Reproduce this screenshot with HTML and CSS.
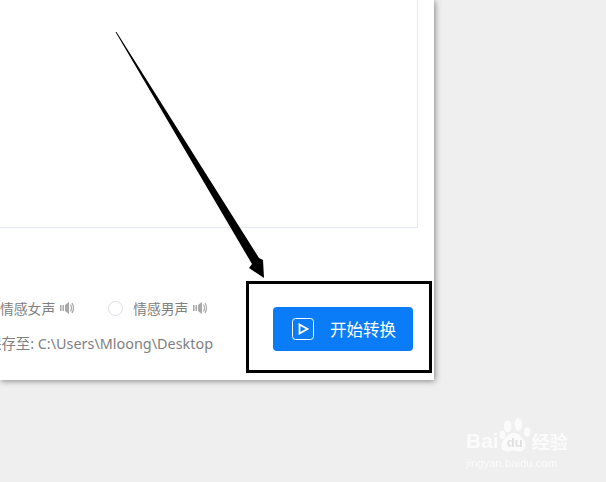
FILE: index.html
```html
<!DOCTYPE html>
<html lang="zh">
<head>
<meta charset="utf-8">
<title>开始转换</title>
<link rel="stylesheet" href="styles.css">
</head>
<body>
<main class="window">
  <div class="text-box"></div>
  <div class="footer">
    <div class="options">
      <div class="voice-row">
        <span class="voice">情感女声
          <svg class="speaker" viewBox="0 0 14 14"><rect x="0" y="4" width="1.5" height="6"/><rect x="2.5" y="4" width="1.5" height="6"/><path d="M5 4 9 1v12L5 10z"/><path class="wave" d="M10.5 3.5q2 3.500 0 7M12 2q3 5 0 10"/></svg>
        </span>
        <span class="radio"></span>
        <span class="voice">情感男声
          <svg class="speaker" viewBox="0 0 14 14"><rect x="0" y="4" width="1.5" height="6"/><rect x="2.5" y="4" width="1.5" height="6"/><path d="M5 4 9 1v12L5 10z"/><path class="wave" d="M10.5 3.5q2 3.500 0 7M12 2q3 5 0 10"/></svg>
        </span>
      </div>
      <div class="save-path">保存至: C:\Users\Mloong\Desktop</div>
    </div>
    <button class="start" type="button">
      <svg class="play" viewBox="0 0 22 22"><rect x=".5" y=".5" width="21" height="21" rx="3"/><path d="M7.500 6.500 15.500 11 7.500 15.500z"/></svg>
      <span>开始转换</span>
    </button>
  </div>
</main>
<div class="highlight"></div>
<svg class="arrow" viewBox="0 0 606 482"><polygon points="115.500,32 116.500,32 259,258 263,260 264,278 249,268 252,264"/></svg>
<div class="watermark">
  <div class="wm-top">
    <span class="wm-latin">Bai</span>
    <span class="wm-paw">
      <svg class="paw" viewBox="0 0 34 36"><ellipse cx="9" cy="9" rx="4" ry="6"/><ellipse cx="20" cy="7" rx="4" ry="6.500"/><ellipse cx="29" cy="15" rx="3.500" ry="5"/><ellipse cx="3.500" cy="18" rx="3" ry="4.500"/><path d="M16 16c5 0 7 4 10 8 3 4 1 11-5 11-2 0-4-1-6-1s-4 1-7 1c-5 0-7-5-4-11 3-4 6-8 12-8z"/></svg>
      <span class="wm-du">du</span>
    </span>
    <span class="wm-cjk">经验</span>
  </div>
  <div class="wm-url">jingyan.baidu.com</div>
</div>
</body>
</html>
```
FILE: styles.css
```css
* { box-sizing: border-box; }
html, body { margin: 0; height: 100%; }
body {
  background: #efefef;
  overflow: hidden;
  position: relative;
  font-family: "Noto Sans CJK SC", "Liberation Sans", sans-serif;
}
.window {
  width: 434px;
  height: 380px;
  background: #fff;
  box-shadow: 1px 1px 6px rgba(0, 0, 0, .45);
  overflow: hidden;
}
.text-box {
  width: 418px;
  height: 228px;
  border-right: 1px solid #e3e9ef;
  border-bottom: 1px solid #e3e9ef;
}
.footer {
  display: flex;
  justify-content: space-between;
  padding: 70px 21px 0 0;
}
.options {
  display: flex;
  flex-direction: column;
  gap: 16px;
  color: #808080;
  font-size: 13.800px;
  line-height: 20px;
}
.voice-row {
  display: flex;
  align-items: center;
}
.voice {
  display: flex;
  align-items: center;
  gap: 5px;
}
.speaker {
  width: 14px;
  height: 14px;
  fill: #a8a8a8;
}
.wave {
  fill: none;
  stroke: #a8a8a8;
  stroke-width: 1.200;
}
.radio {
  width: 15px;
  height: 15px;
  margin: 0 10px 0 34px;
  border: 1px solid #dcdfe6;
  border-radius: 50%;
}
.save-path {
  margin-left: -13px;
  white-space: nowrap;
  font-family: "Noto Sans", "Noto Sans CJK SC", sans-serif;
  font-size: 14.400px;
}
.start {
  display: flex;
  align-items: center;
  gap: 16px;
  flex: none;
  width: 140px;
  height: 44px;
  margin-top: 9px;
  padding: 0 0 0 19px;
  border: 0;
  border-radius: 4px;
  background: #0a7cf7;
  color: #fff;
  font: 16.500px "Noto Sans CJK SC", sans-serif;
}
.play {
  width: 22px;
  height: 22px;
  fill: none;
  stroke: #fff;
}
.play path { stroke-width: 1.800; }
.highlight {
  position: absolute;
  left: 246px;
  top: 281px;
  width: 186px;
  height: 92px;
  border: 3px solid #000;
}
.arrow {
  position: absolute;
  left: 0;
  top: 0;
  width: 606px;
  height: 482px;
}
.watermark {
  position: absolute;
  left: 466px;
  top: 417px;
  width: 108px;
  color: #fff;
  opacity: .75;
  filter: blur(.4px);
}
.wm-top {
  display: flex;
  align-items: flex-end;
  height: 36px;
}
.wm-latin {
  font: bold 21px/24px "Liberation Sans", sans-serif;
}
.wm-paw {
  position: relative;
  width: 33px;
  height: 36px;
  flex: none;
}
.paw {
  display: block;
  width: 33px;
  height: 36px;
  fill: #fff;
}
.wm-du {
  position: absolute;
  left: 8px;
  top: 19px;
  color: #dcdcdc;
  font: bold 13px/14px "Liberation Sans", sans-serif;
}
.wm-cjk {
  font: bold 18px/24px "Noto Sans CJK SC", sans-serif;
  white-space: nowrap;
}
.wm-url {
  margin-top: 4px;
  font: 11.300px/12px "Liberation Sans", sans-serif;
  white-space: nowrap;
}
```
